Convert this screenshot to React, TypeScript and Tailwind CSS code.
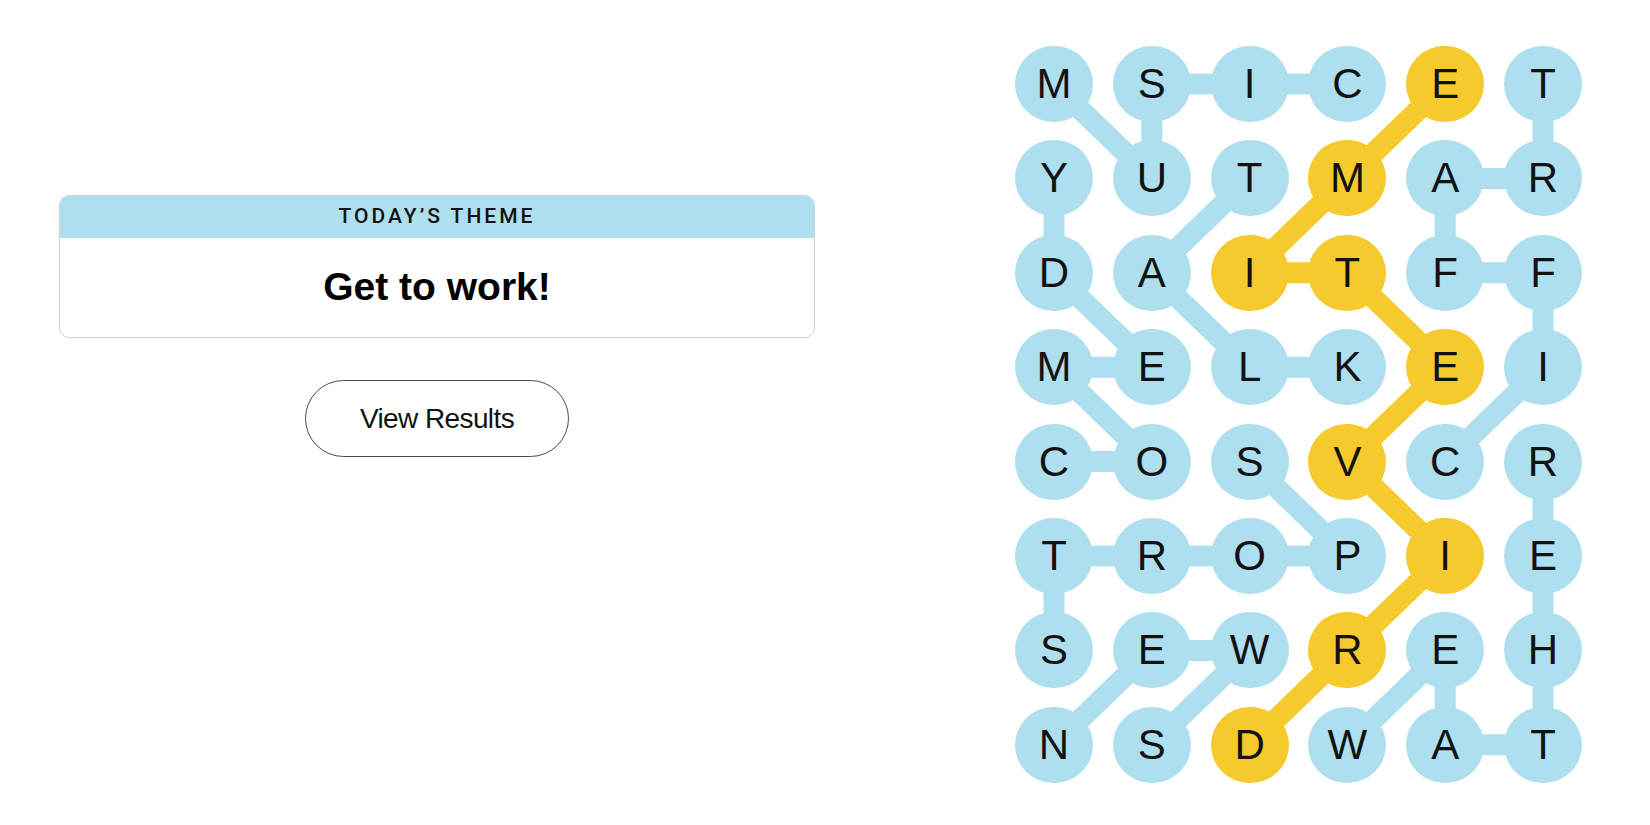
const LETTERS = [
  'MSICET',
  'YUTMAR',
  'DAITFF',
  'MELKEI',
  'COSVCR',
  'TROPIE',
  'SEWREH',
  'NSDWAT',
];

type Cell = [number, number];

const BLUE_EDGES: [Cell, Cell][] = [
  // MUSIC
  [[0, 0], [1, 1]],
  [[1, 1], [0, 1]],
  [[0, 1], [0, 2]],
  [[0, 2], [0, 3]],
  // TRAFFIC
  [[0, 5], [1, 5]],
  [[1, 5], [1, 4]],
  [[1, 4], [2, 4]],
  [[2, 4], [2, 5]],
  [[2, 5], [3, 5]],
  [[3, 5], [4, 4]],
  // COMEDY
  [[4, 0], [4, 1]],
  [[4, 1], [3, 0]],
  [[3, 0], [3, 1]],
  [[3, 1], [2, 0]],
  [[2, 0], [1, 0]],
  // TALK
  [[1, 2], [2, 1]],
  [[2, 1], [3, 2]],
  [[3, 2], [3, 3]],
  // SPORTS
  [[4, 2], [5, 3]],
  [[5, 3], [5, 2]],
  [[5, 2], [5, 1]],
  [[5, 1], [5, 0]],
  [[5, 0], [6, 0]],
  // WEATHER
  [[7, 3], [6, 4]],
  [[6, 4], [7, 4]],
  [[7, 4], [7, 5]],
  [[7, 5], [6, 5]],
  [[6, 5], [5, 5]],
  [[5, 5], [4, 5]],
  // NEWS
  [[7, 0], [6, 1]],
  [[6, 1], [6, 2]],
  [[6, 2], [7, 1]],
];

// DRIVETIME
const SPANGRAM: Cell[] = [
  [7, 2],
  [6, 3],
  [5, 4],
  [4, 3],
  [3, 4],
  [2, 3],
  [2, 2],
  [1, 3],
  [0, 4],
];

const BLUE = '#aedfee';
const YELLOW = '#f6c92c';

const cx = (c: number) => 39 + c * 97.8;
const cy = (r: number) => 38 + r * 94.4;

const isSpangram = (r: number, c: number) =>
  SPANGRAM.some(([sr, sc]) => sr === r && sc === c);

const Board: React.FC = () => (
  <div className="relative w-[567px] h-[737px]">
    <svg className="absolute inset-0" width="567" height="737">
      {BLUE_EDGES.map(([a, b], i) => (
        <line
          key={i}
          x1={cx(a[1])}
          y1={cy(a[0])}
          x2={cx(b[1])}
          y2={cy(b[0])}
          stroke={BLUE}
          strokeWidth={21}
        />
      ))}
      {SPANGRAM.slice(1).map((b, i) => {
        const a = SPANGRAM[i];
        return (
          <line
            key={`y${i}`}
            x1={cx(a[1])}
            y1={cy(a[0])}
            x2={cx(b[1])}
            y2={cy(b[0])}
            stroke={YELLOW}
            strokeWidth={21}
          />
        );
      })}
    </svg>
    <div className="relative grid grid-cols-[repeat(6,78px)] gap-x-[19.8px] gap-y-[18.4px]">
      {LETTERS.map((row, r) =>
        row.split('').map((ch, c) => (
          <div
            key={`${r}-${c}`}
            className={
              isSpangram(r, c)
                ? 'w-[78px] h-[76px] rounded-full bg-[#f6c92c] flex items-center justify-center'
                : 'w-[78px] h-[76px] rounded-full bg-[#aedfee] flex items-center justify-center'
            }
          >
            <span className="text-[42px] leading-none text-[#121212]">{ch}</span>
          </div>
        )),
      )}
    </div>
  </div>
);

const App: React.FC = () => (
  <div className="flex w-[1650px] h-[825px] bg-white font-['Liberation_Sans',Arial,sans-serif]">
    <div className="w-[874px] pt-[195px] flex flex-col items-center">
      <div className="w-[756px] border border-[#d2d2d2] rounded-[10px] overflow-hidden">
        <div className="h-[42px] bg-[#aedfee] flex items-center justify-center">
          <p className="font-['Roboto',Arial,sans-serif] font-medium text-[21px] tracking-[3px] text-[#121212]">
            TODAY’S THEME
          </p>
        </div>
        <div className="h-[99px] flex items-center justify-center">
          <p className="text-[39px] font-bold text-black">Get to work!</p>
        </div>
      </div>
      <button className="mt-[42px] w-[264px] h-[77px] rounded-full border border-[#4a4a4a] bg-white text-[28px] tracking-[-0.6px] text-[#121212]">
        View Results
      </button>
    </div>
    <div className="pl-[141px] pt-[46px]">
      <Board />
    </div>
  </div>
);

export default App;
